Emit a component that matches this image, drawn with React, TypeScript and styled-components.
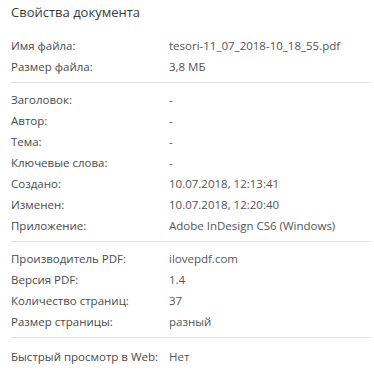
import React from "react";
import styled, { createGlobalStyle } from "styled-components";

const Global = createGlobalStyle`
  html, body { margin: 0; padding: 0; background: #ffffff; }
  body { font-family: "Open Sans", "Noto Sans", sans-serif; }
`;

const Panel = styled.div`
  width: 374px;
  height: 378px;
  box-sizing: border-box;
  padding: 0 4px 0 11px;
  background: #fff;
  color: #4a4a4a;
`;

const Title = styled.h1`
  margin: 0;
  height: 24px;
  display: flex;
  align-items: center;
  font-size: 13px;
  font-weight: 400;
  color: #3a3a3a;
`;

const Group = styled.div<{ $top?: number }>`
  padding-top: ${(p) => p.$top ?? 6}px;
  padding-bottom: 5px;
  border-bottom: 1px solid #e0e0e0;
  &:last-child { border-bottom: none; padding-top: 8px; }
`;

const Row = styled.div`
  display: grid;
  grid-template-columns: 158px 1fr;
  height: 21px;
  align-items: center;
  font-size: 11.5px;
  white-space: nowrap;
`;

const Label = styled.span`
  color: #4a4a4a;
`;

const Value = styled.span`
  color: #555;
`;

type Item = [string, string];

const groups: Item[][] = [
  [
    ["Имя файла:", "tesori-11_07_2018-10_18_55.pdf"],
    ["Размер файла:", "3,8 МБ"],
  ],
  [
    ["Заголовок:", "-"],
    ["Автор:", "-"],
    ["Тема:", "-"],
    ["Ключевые слова:", "-"],
    ["Создано:", "10.07.2018, 12:13:41"],
    ["Изменен:", "10.07.2018, 12:20:40"],
    ["Приложение:", "Adobe InDesign CS6 (Windows)"],
  ],
  [
    ["Производитель PDF:", "ilovepdf.com"],
    ["Версия PDF:", "1.4"],
    ["Количество страниц:", "37"],
    ["Размер страницы:", "разный"],
  ],
  [["Быстрый просмотр в Web:", "Нет"]],
];

export default function App() {
  return (
    <>
      <Global />
      <Panel>
        <Title>Свойства документа</Title>
        {groups.map((g, i) => (
          <Group key={i} $top={i === 0 ? 11 : 6}>
            {g.map(([l, v]) => (
              <Row key={l}>
                <Label>{l}</Label>
                <Value>{v}</Value>
              </Row>
            ))}
          </Group>
        ))}
      </Panel>
    </>
  );
}
